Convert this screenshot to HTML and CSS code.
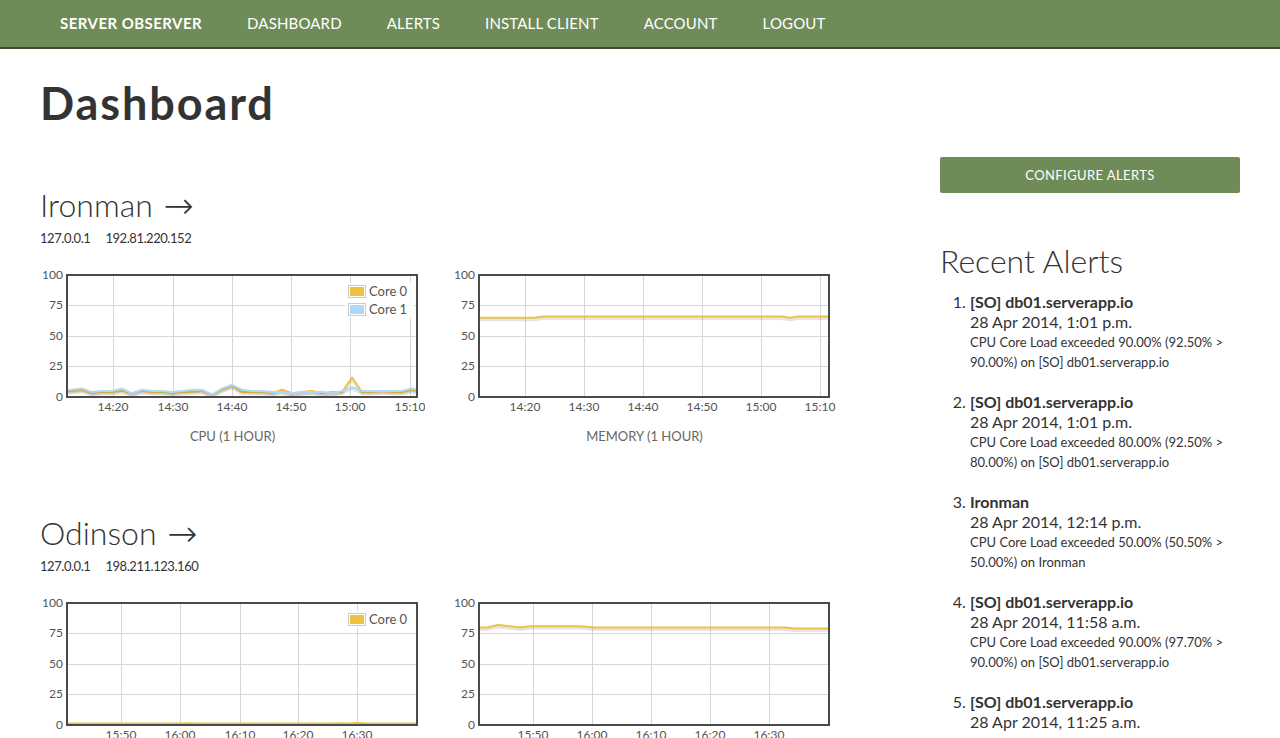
FILE: index.html
```html
<!DOCTYPE html>
<html lang="en">
<head>
<meta charset="utf-8">
<title>Dashboard - Server Observer</title>
<link rel="stylesheet" href="styles.css">
</head>
<body>
<nav class="navbar">
  <a class="nav-link brand" href="#">Server Observer</a>
  <a class="nav-link" href="#">Dashboard</a>
  <a class="nav-link" href="#">Alerts</a>
  <a class="nav-link" href="#">Install Client</a>
  <a class="nav-link" href="#">Account</a>
  <a class="nav-link" href="#">Logout</a>
</nav>

<main class="container">
  <h1 class="page-title">Dashboard</h1>
  <div class="layout">
    <section class="servers">
      <div class="server">
        <h2 class="server-name"><a href="#">Ironman <span class="arrow">&rarr;</span></a></h2>
        <div class="ips"><span>127.0.0.1</span><span>192.81.220.152</span></div>
        <div class="charts">
          <div class="chart">
            <svg class="plot" width="385" height="150" viewBox="0 0 385 150">
              <defs><clipPath id="c1"><rect x="27" y="9" width="350" height="122"/></clipPath></defs>
              <g class="grid">
                <line x1="27" x2="377" y1="39.5" y2="39.5"/><line x1="27" x2="377" y1="70.5" y2="70.5"/><line x1="27" x2="377" y1="100.5" y2="100.5"/>
                <line x1="73.5" x2="73.5" y1="9" y2="131"/><line x1="133.5" x2="133.5" y1="9" y2="131"/><line x1="192.5" x2="192.5" y1="9" y2="131"/><line x1="251.5" x2="251.5" y1="9" y2="131"/><line x1="310.5" x2="310.5" y1="9" y2="131"/><line x1="370.5" x2="370.5" y1="9" y2="131"/>
              </g>
              <g class="ticks ylab">
                <text x="23" y="12.5">100</text><text x="23" y="43">75</text><text x="23" y="73.5">50</text><text x="23" y="104">25</text><text x="23" y="134.5">0</text>
              </g>
              <g class="ticks xlab">
                <text x="73" y="145">14:20</text><text x="133" y="145">14:30</text><text x="192" y="145">14:40</text><text x="251" y="145">14:50</text><text x="310" y="145">15:00</text><text x="370" y="145">15:10</text>
              </g>
              <g clip-path="url(#c1)">
                <polyline class="shadow" points="22,126.1 32,124.9 42,123.7 52,127.3 62,126.1 72,126.1 82,124.9 92,127.3 102,124.9 112,126.1 122,126.1 132,127.3 142,126.1 152,126.1 162,124.9 172,128.6 182,123.7 192,120 202,126.1 212,126.1 222,126.1 232,127.3 242,123.7 252,127.3 262,126.1 272,124.9 282,127.3 292,126.1 302,126.1 312,111.5 322,126.1 332,126.1 342,124.9 352,126.1 362,126.1 372,123.7 382,126.1"/>
                <polyline class="series s-yellow" points="22,126.1 32,124.9 42,123.7 52,127.3 62,126.1 72,126.1 82,124.9 92,127.3 102,124.9 112,126.1 122,126.1 132,127.3 142,126.1 152,126.1 162,124.9 172,128.6 182,123.7 192,120 202,126.1 212,126.1 222,126.1 232,127.3 242,123.7 252,127.3 262,126.1 272,124.9 282,127.3 292,126.1 302,126.1 312,111.5 322,126.1 332,126.1 342,124.9 352,126.1 362,126.1 372,123.7 382,126.1"/>
                <polyline class="shadow" points="22,124.9 32,123.7 42,122.5 52,126.1 62,124.9 72,124.9 82,122.5 92,127.3 102,123.7 112,124.9 122,124.9 132,126.1 142,124.9 152,123.7 162,123.7 172,128.6 182,122.5 192,118.8 202,123.7 212,124.9 222,124.9 232,126.1 242,126.1 252,127.3 262,126.1 272,126.1 282,126.1 292,127.3 302,124.9 312,121.2 322,124.9 332,124.9 342,124.9 352,124.9 362,124.9 372,122.5 382,124.9"/>
                <polyline class="series s-blue" points="22,124.9 32,123.7 42,122.5 52,126.1 62,124.9 72,124.9 82,122.5 92,127.3 102,123.7 112,124.9 122,124.9 132,126.1 142,124.9 152,123.7 162,123.7 172,128.6 182,122.5 192,118.8 202,123.7 212,124.9 222,124.9 232,126.1 242,126.1 252,127.3 262,126.1 272,126.1 282,126.1 292,127.3 302,124.9 312,121.2 322,124.9 332,124.9 342,124.9 352,124.9 362,124.9 372,122.5 382,124.9"/>
              </g>
              <rect class="frame" x="27" y="9" width="350" height="122"/>
              <g class="legend">
                <rect class="legend-bg" x="305" y="16" width="69" height="36"/>
                <rect class="swatch-box" x="308.5" y="19.5" width="17" height="12"/><rect class="swatch s-yellow-fill" x="310" y="21" width="14" height="9"/>
                <text x="329" y="30">Core 0</text>
                <rect class="swatch-box" x="308.5" y="37.5" width="17" height="12"/><rect class="swatch s-blue-fill" x="310" y="39" width="14" height="9"/>
                <text x="329" y="48">Core 1</text>
              </g>
            </svg>
            <div class="chart-caption">CPU (1 hour)</div>
          </div>
          <div class="chart">
            <svg class="plot" width="385" height="150" viewBox="0 0 385 150">
              <defs><clipPath id="c2"><rect x="27" y="9" width="350" height="122"/></clipPath></defs>
              <g class="grid">
                <line x1="27" x2="377" y1="39.5" y2="39.5"/><line x1="27" x2="377" y1="70.5" y2="70.5"/><line x1="27" x2="377" y1="100.5" y2="100.5"/>
                <line x1="73.5" x2="73.5" y1="9" y2="131"/><line x1="132.5" x2="132.5" y1="9" y2="131"/><line x1="191.5" x2="191.5" y1="9" y2="131"/><line x1="250.5" x2="250.5" y1="9" y2="131"/><line x1="309.5" x2="309.5" y1="9" y2="131"/><line x1="368.5" x2="368.5" y1="9" y2="131"/>
              </g>
              <g class="ticks ylab">
                <text x="23" y="12.5">100</text><text x="23" y="43">75</text><text x="23" y="73.5">50</text><text x="23" y="104">25</text><text x="23" y="134.5">0</text>
              </g>
              <g class="ticks xlab">
                <text x="73" y="145">14:20</text><text x="132" y="145">14:30</text><text x="191" y="145">14:40</text><text x="250" y="145">14:50</text><text x="309" y="145">15:00</text><text x="368" y="145">15:10</text>
              </g>
              <g clip-path="url(#c2)">
                <polyline class="shadow" points="22,51.7 82,51.7 92,50.5 330,50.5 338,51.7 346,50.5 382,50.5"/>
                <polyline class="series s-yellow" points="22,51.7 82,51.7 92,50.5 330,50.5 338,51.7 346,50.5 382,50.5"/>
              </g>
              <rect class="frame" x="27" y="9" width="350" height="122"/>
            </svg>
            <div class="chart-caption">Memory (1 hour)</div>
          </div>
        </div>
      </div>

      <div class="server">
        <h2 class="server-name"><a href="#">Odinson <span class="arrow">&rarr;</span></a></h2>
        <div class="ips"><span>127.0.0.1</span><span>198.211.123.160</span></div>
        <div class="charts">
          <div class="chart">
            <svg class="plot" width="385" height="150" viewBox="0 0 385 150">
              <defs><clipPath id="c3"><rect x="27" y="9" width="350" height="122"/></clipPath></defs>
              <g class="grid">
                <line x1="27" x2="377" y1="39.5" y2="39.5"/><line x1="27" x2="377" y1="70.5" y2="70.5"/><line x1="27" x2="377" y1="100.5" y2="100.5"/>
                <line x1="81.5" x2="81.5" y1="9" y2="131"/><line x1="140.5" x2="140.5" y1="9" y2="131"/><line x1="200.5" x2="200.5" y1="9" y2="131"/><line x1="258.5" x2="258.5" y1="9" y2="131"/><line x1="317.5" x2="317.5" y1="9" y2="131"/>
              </g>
              <g class="ticks ylab">
                <text x="23" y="12.5">100</text><text x="23" y="43">75</text><text x="23" y="73.5">50</text><text x="23" y="104">25</text><text x="23" y="134.5">0</text>
              </g>
              <g class="ticks xlab">
                <text x="81" y="145">15:50</text><text x="140" y="145">16:00</text><text x="200" y="145">16:10</text><text x="258" y="145">16:20</text><text x="317" y="145">16:30</text>
              </g>
              <g clip-path="url(#c3)">
                <polyline class="shadow" points="22,129.6 140,129.6 150,129.3 160,129.6 290,129.6 298,129.2 306,129.6 318,129 328,129.6 382,129.6"/>
                <polyline class="series s-yellow" points="22,129.6 140,129.6 150,129.3 160,129.6 290,129.6 298,129.2 306,129.6 318,129 328,129.6 382,129.6"/>
              </g>
              <rect class="frame" x="27" y="9" width="350" height="122"/>
              <g class="legend">
                <rect class="legend-bg" x="305" y="16" width="69" height="18"/>
                <rect class="swatch-box" x="308.5" y="19.5" width="17" height="12"/><rect class="swatch s-yellow-fill" x="310" y="21" width="14" height="9"/>
                <text x="329" y="30">Core 0</text>
              </g>
            </svg>
            <div class="chart-caption">CPU (1 hour)</div>
          </div>
          <div class="chart">
            <svg class="plot" width="385" height="150" viewBox="0 0 385 150">
              <defs><clipPath id="c4"><rect x="27" y="9" width="350" height="122"/></clipPath></defs>
              <g class="grid">
                <line x1="27" x2="377" y1="39.5" y2="39.5"/><line x1="27" x2="377" y1="70.5" y2="70.5"/><line x1="27" x2="377" y1="100.5" y2="100.5"/>
                <line x1="81.5" x2="81.5" y1="9" y2="131"/><line x1="140.5" x2="140.5" y1="9" y2="131"/><line x1="199.5" x2="199.5" y1="9" y2="131"/><line x1="258.5" x2="258.5" y1="9" y2="131"/><line x1="317.5" x2="317.5" y1="9" y2="131"/>
              </g>
              <g class="ticks ylab">
                <text x="23" y="12.5">100</text><text x="23" y="43">75</text><text x="23" y="73.5">50</text><text x="23" y="104">25</text><text x="23" y="134.5">0</text>
              </g>
              <g class="ticks xlab">
                <text x="81" y="145">15:50</text><text x="140" y="145">16:00</text><text x="199" y="145">16:10</text><text x="258" y="145">16:20</text><text x="317" y="145">16:30</text>
              </g>
              <g clip-path="url(#c4)">
                <polyline class="shadow" points="22,33.4 35,33.4 46,31 68,33.4 78,32.2 128,32.2 142,33.4 334,33.4 342,34.6 382,34.6"/>
                <polyline class="series s-yellow" points="22,33.4 35,33.4 46,31 68,33.4 78,32.2 128,32.2 142,33.4 334,33.4 342,34.6 382,34.6"/>
              </g>
              <rect class="frame" x="27" y="9" width="350" height="122"/>
            </svg>
            <div class="chart-caption">Memory (1 hour)</div>
          </div>
        </div>
      </div>
    </section>

    <aside class="sidebar">
      <a class="btn-configure" href="#">Configure Alerts</a>
      <h2 class="sidebar-title">Recent Alerts</h2>
      <ol class="alert-list">
        <li class="alert-item">
          <div class="alert-title">[SO] db01.serverapp.io</div>
          <div class="alert-date">28 Apr 2014, 1:01 p.m.</div>
          <div class="alert-desc">CPU Core Load exceeded 90.00% (92.50% &gt;<br>90.00%) on [SO] db01.serverapp.io</div>
        </li>
        <li class="alert-item">
          <div class="alert-title">[SO] db01.serverapp.io</div>
          <div class="alert-date">28 Apr 2014, 1:01 p.m.</div>
          <div class="alert-desc">CPU Core Load exceeded 80.00% (92.50% &gt;<br>80.00%) on [SO] db01.serverapp.io</div>
        </li>
        <li class="alert-item">
          <div class="alert-title">Ironman</div>
          <div class="alert-date">28 Apr 2014, 12:14 p.m.</div>
          <div class="alert-desc">CPU Core Load exceeded 50.00% (50.50% &gt;<br>50.00%) on Ironman</div>
        </li>
        <li class="alert-item">
          <div class="alert-title">[SO] db01.serverapp.io</div>
          <div class="alert-date">28 Apr 2014, 11:58 a.m.</div>
          <div class="alert-desc">CPU Core Load exceeded 90.00% (97.70% &gt;<br>90.00%) on [SO] db01.serverapp.io</div>
        </li>
        <li class="alert-item">
          <div class="alert-title">[SO] db01.serverapp.io</div>
          <div class="alert-date">28 Apr 2014, 11:25 a.m.</div>
        </li>
      </ol>
    </aside>
  </div>
</main>
</body>
</html>
```

FILE: styles.css
```css
* {
  box-sizing: border-box;
}

body {
  margin: 0;
  font-family: Lato, "DejaVu Sans", sans-serif;
  color: #333;
  background: #fff;
}

.navbar {
  height: 49px;
  background: #6f8b57;
  border-bottom: 2px solid #3e4a33;
  display: flex;
  align-items: center;
  gap: 45px;
  padding-left: 60px;
}

.nav-link {
  color: #fff;
  text-decoration: none;
  font-size: 15px;
  line-height: 47px;
  text-transform: uppercase;
  letter-spacing: 0.15px;
}

.nav-link.brand {
  font-weight: 700;
  letter-spacing: 0.45px;
}

.container {
  width: 1200px;
  margin-left: 40px;
}

.page-title {
  font-size: 45px;
  font-weight: 700;
  line-height: 54px;
  letter-spacing: 1.9px;
  margin: 27px 0 0;
}

.layout {
  display: grid;
  grid-template-columns: 800px 300px;
  column-gap: 100px;
  margin-top: 27px;
}

.server {
  margin-top: 30px;
}

.server + .server {
  margin-top: 70px;
}

.server-name {
  font-size: 32px;
  font-weight: 300;
  line-height: 36px;
  margin: 0;
}

.server-name a {
  color: #333;
  text-decoration: none;
}

.arrow {
  font-family: "DejaVu Sans", sans-serif;
  font-size: 36px;
  font-weight: 300;
  margin-left: 2px;
  vertical-align: -1px;
}

.ips {
  display: flex;
  gap: 15px;
  font-size: 13px;
  line-height: 18px;
  letter-spacing: -0.45px;
  margin-top: 5px;
}

.charts {
  display: grid;
  grid-template-columns: 385px 385px;
  column-gap: 27px;
  margin-top: 19px;
}

.plot {
  display: block;
}

.grid line {
  stroke: #d6d6d6;
  stroke-width: 1;
}

.ticks text {
  font-family: Lato, "DejaVu Sans", sans-serif;
  font-size: 12px;
  fill: #545454;
}

.ylab text {
  text-anchor: end;
}

.xlab text {
  text-anchor: middle;
}

.frame {
  fill: none;
  stroke: #4a4a4a;
  stroke-width: 2;
}

.series {
  fill: none;
  stroke-width: 2;
  stroke-linejoin: round;
}

.shadow {
  fill: none;
  stroke: rgba(0, 0, 0, 0.1);
  stroke-width: 3;
  stroke-linejoin: round;
  transform: translate(0, 2px);
}

.s-yellow {
  stroke: #edc240;
}

.s-blue {
  stroke: #afd8f8;
}

.s-yellow-fill {
  fill: #edc240;
}

.s-blue-fill {
  fill: #afd8f8;
}

.legend-bg {
  fill: #fff;
  opacity: 0.85;
}

.swatch-box {
  fill: #fff;
  stroke: #ccc;
  stroke-width: 1;
}

.legend text {
  font-family: Lato, "DejaVu Sans", sans-serif;
  font-size: 13px;
  fill: #545454;
}

.chart-caption {
  margin-top: 11px;
  text-align: center;
  font-size: 13px;
  line-height: 18px;
  color: #666;
  text-transform: uppercase;
}

.btn-configure {
  display: block;
  height: 36px;
  line-height: 36px;
  background: #6f8b57;
  color: #fff;
  text-align: center;
  font-size: 13px;
  letter-spacing: 0.4px;
  text-transform: uppercase;
  text-decoration: none;
  border-radius: 2px;
}

.sidebar-title {
  font-size: 32px;
  font-weight: 300;
  line-height: 36px;
  margin: 50px 0 0;
}

.alert-list {
  margin: 13px 0 0;
  padding-left: 30px;
}

.alert-item {
  font-size: 16px;
  line-height: 20px;
  margin-bottom: 20px;
}

.alert-title {
  font-weight: 700;
}

.alert-desc {
  font-size: 13px;
  line-height: 20px;
}
```
